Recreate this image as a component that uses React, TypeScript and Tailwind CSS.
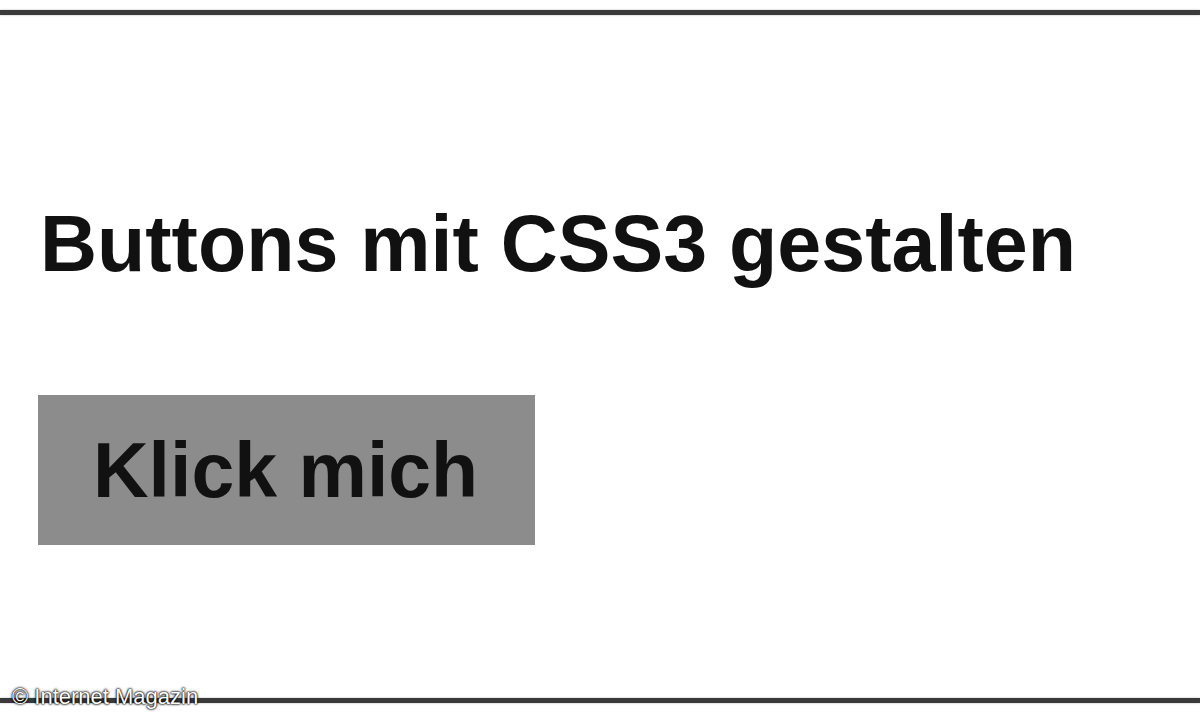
export default function App() {
  return (
    <div className="relative flex flex-col h-[720px] w-[1200px] bg-white font-['Liberation_Sans',Arial,sans-serif] overflow-hidden">
      {/* obere Linie */}
      <div className="mt-[10px] h-[5px] w-full bg-[#3a3a3a] shadow-[0_0_2px_rgba(0,0,0,0.35)]" />

      <h1 className="mt-[189px] ml-[40px] text-[79px] leading-none font-bold text-[#111]">
        Buttons mit CSS3 gestalten
      </h1>

      <button className="mt-[112px] ml-[38px] w-[497px] h-[150px] bg-[#8c8c8c] text-left pl-[55px] pt-[37px] self-start flex items-start">
        <span className="text-[77px] leading-none font-bold text-[#111]">Klick mich</span>
      </button>

      {/* untere Linie */}
      <div className="mt-auto mb-[17px] h-[5px] w-full bg-[#3a3a3a] shadow-[0_0_2px_rgba(0,0,0,0.35)]" />

      <span className="absolute left-[12px] top-[686px] text-[22px] leading-none text-white [text-shadow:0_0_2px_#000,0_0_3px_#000,0_0_1px_#000]">
        © Internet Magazin
      </span>
    </div>
  );
}
